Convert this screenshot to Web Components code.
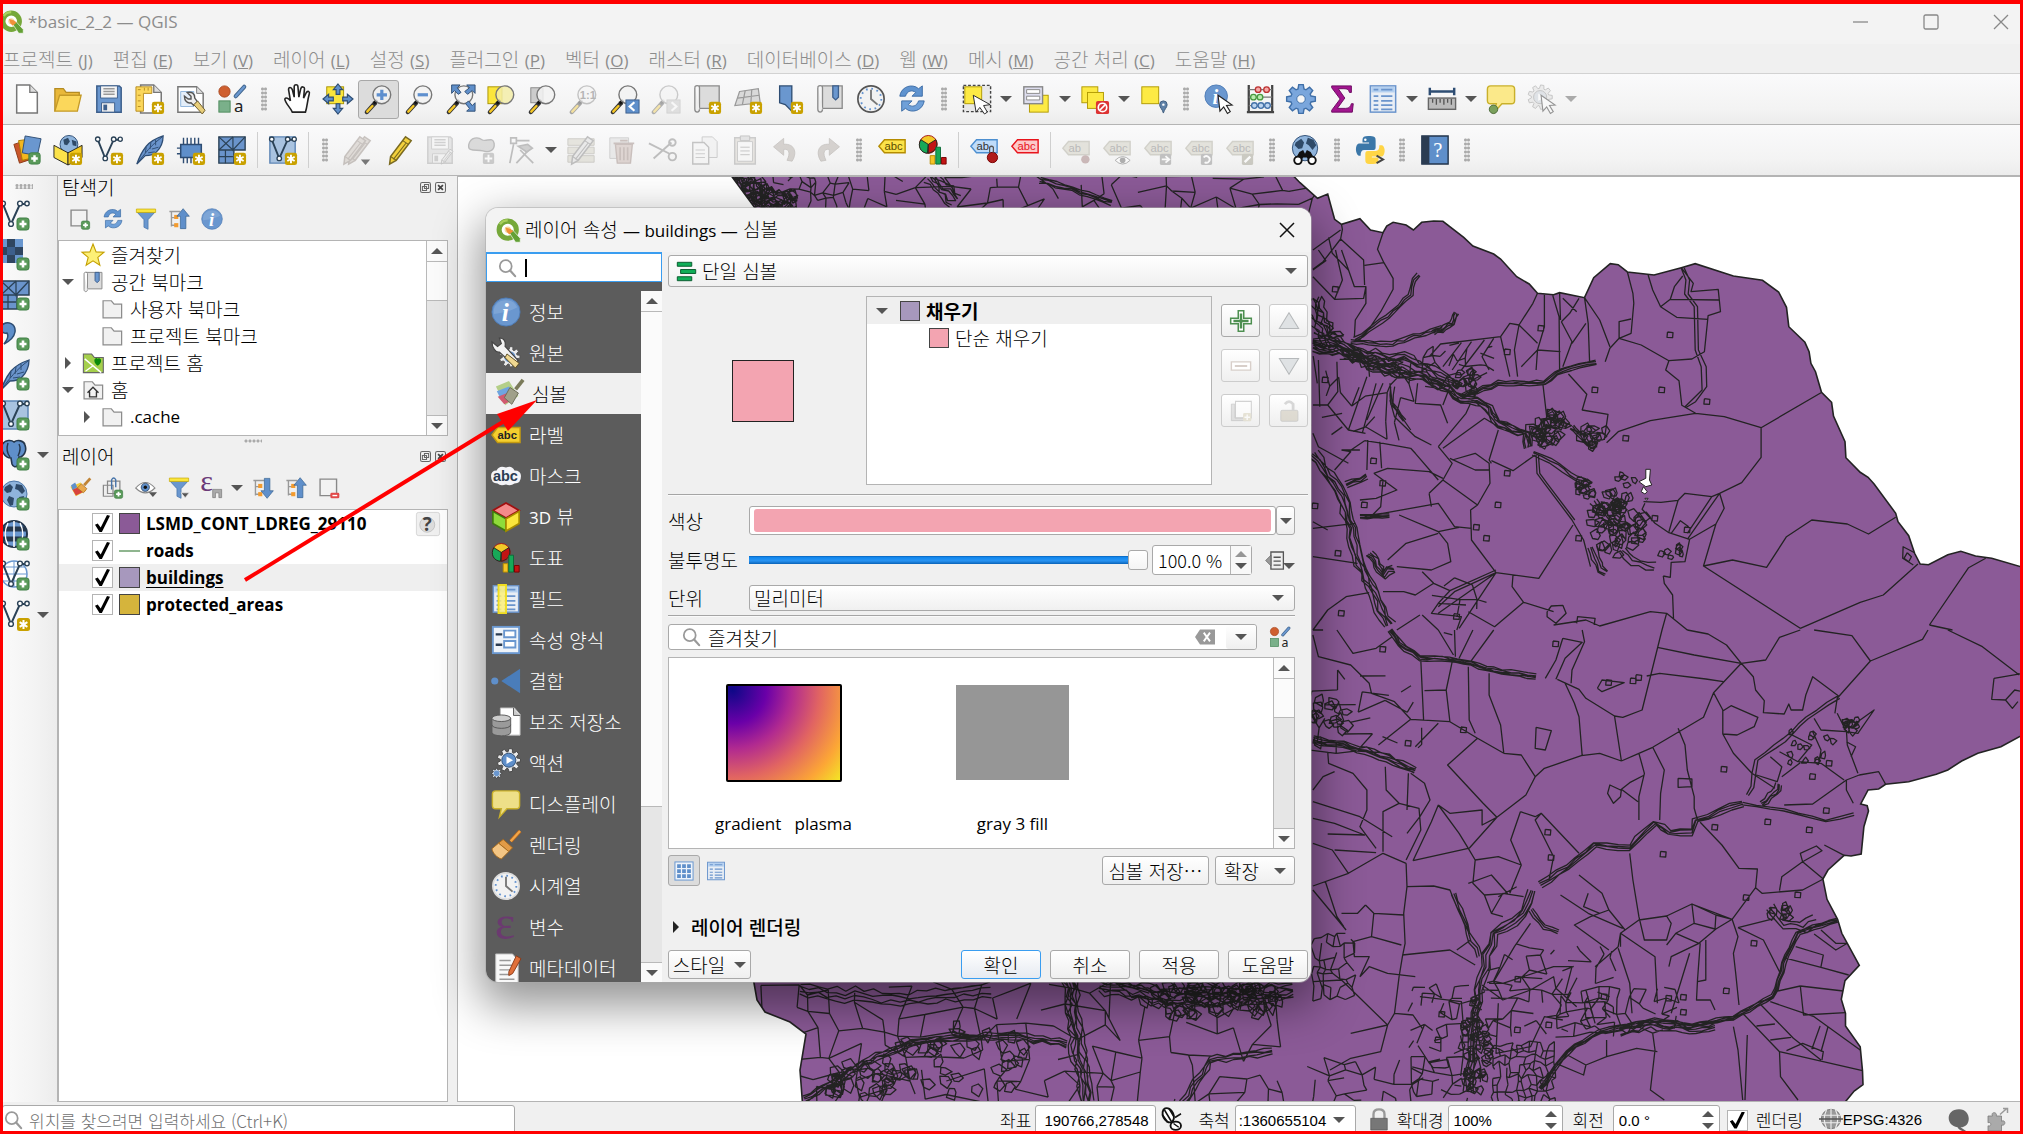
<!DOCTYPE html>
<html lang="ko">
<head>
<meta charset="utf-8">
<title>*basic_2_2 — QGIS</title>
<style>
  html, body { margin: 0; height: 100%; overflow: hidden; }
  body { font: 300 19px/24px "Noto Sans CJK KR", sans-serif; color: #000; background: #f0f0f0; }
</style>
</head>
<body>
<gis-app></gis-app>
<script>
/* ---------- icon library (32 x 32 grid) ---------- */
const plus = '<rect x="18" y="19" width="12" height="12" rx="2.5" fill="#5a9a5a" stroke="#3f7f45"/><path d="M24 21.500v7M20.500 25h7" stroke="#fff" stroke-width="2.600"/>';
const star = '<rect x="18" y="19" width="13" height="13" rx="2.500" fill="#c9a100"/><path d="M24.500 21v9M20.600 23.200l7.800 4.600M20.600 27.800l7.800-4.600" stroke="#fff" stroke-width="2"/>';
const gear = (cx, cy, r, n, fill, stroke) => {
  let d = '';
  for (let i = 0; i < n; i++) {
    const a = i * 2 * Math.PI / n, s = Math.PI / n;
    [[-.75, .72], [-.4, 1], [.4, 1], [.75, .72]].forEach(([o, k], j) => {
      d += (i || j ? 'L' : 'M') + (cx + r * k * Math.cos(a + o * s)).toFixed(1) + ' ' + (cy + r * k * Math.sin(a + o * s)).toFixed(1);
    });
  }
  return `<path d="${d}Z" fill="${fill}" stroke="${stroke}"/>`;
};
const mag = (inner = '', fill = '#f2f2f2') => `<path d="M12 20L3 30" stroke="#333" stroke-width="4.500" stroke-linecap="round"/><path d="M9 23.500L3.500 29.500" stroke="#f5c726" stroke-width="2.600" stroke-linecap="round"/><path d="M14 17l-3.500 4" stroke="#111" stroke-width="3"/><circle cx="19" cy="11.500" r="9.500" fill="${fill}" fill-opacity=".85" stroke="#777" stroke-width="1.500"/>${inner}`;
const cursor = '<path d="M15 12l2 17 4-4.500 4 7 3-2-4-6.500 6-.5z" fill="#fff" stroke="#222" stroke-width="1.200"/>';
const vee = '<path d="M4 5l8 20L21 5h6" fill="none" stroke="#2b4257" stroke-width="2"/><g fill="#fff" stroke="#2b4257" stroke-width="1.400"><circle cx="4" cy="4.500" r="2.400"/><circle cx="12" cy="25" r="2.400"/><circle cx="21" cy="4.500" r="2.400"/><circle cx="28" cy="4.500" r="2.200"/></g>';
const tag = (fill, stroke, ink, t = 'abc', y = 0) => `<path d="M2 ${12 + y}l6-7h22v14H8z" fill="${fill}" stroke="${stroke}" stroke-width="1.500"/><text x="8" y="${16 + y}" font-size="12" font-family="Liberation Sans" fill="${ink}">${t}</text>`;
const grayTag = (extra, t = 'abc') => `<g opacity=".55">${tag('#d5d3c6', '#b5b3a6', '#888', t, 2)}${extra}</g>`;
const feather = '<path d="M2 31C5 22 8 17 12 12 17 6 24 3 30 1c0 7-2 12-7 17-3 3-7 4-12 4z" fill="#6a94cc" stroke="#2e4d73" stroke-width="1.300"/><path d="M2 31C10 20 18 10 29 2M12 13l-1 6M17 8l-1 7M22 5v6M14 19l7-1M18 15l7-2" fill="none" stroke="#2e4d73"/>';
const meshBox = '<path d="M2 2h28v14H2zM2 16h16v14H2z" fill="#6a94cc" stroke="#2b4257" stroke-width="1.500"/><path d="M2 2l15 14M17 2L2 16M17 2v14L30 2M9 16v14M2 23h15" stroke="#2b4257" stroke-width="1.300"/>';
const vbox = '<path d="M2 2h27v28H2z" fill="#a9c3e0" stroke="#5e86b5" stroke-width="1.500"/>' + vee;
const globe = '<circle cx="15" cy="15" r="13" fill="#8fb4dc" stroke="#4d77a8"/><path d="M6 8l5-3 3 3-2 5-4 1-3-3zM17 5l6 1 3 6-3 3-4-4-3-1zM10 17l5 2-1 7-3 1-3-6zM20 18l5-1-1 5-3 2z" fill="#2f4a68"/>';
const refresh = '<path d="M3 13C4 5 12 0 20 3l3 2 4-3v11H16l4-4c-4-3-9-2-11 4z" fill="#5f93cf" stroke="#3c6ca5"/><path d="M29 18c-1 8-9 13-17 10l-3-2-4 3V18h11l-4 4c4 3 9 2 11-4z" fill="#6fa0d8" stroke="#3c6ca5"/>';
const info = '<circle cx="16" cy="16" r="15" fill="#6a97cf" stroke="#4d7bb5"/><path d="M3 13A13.500 13.500 0 0 1 28 11C20 16 10 17 3 18z" fill="#8fb3de" opacity=".5"/><text x="11.500" y="26" font-size="27" font-style="italic" font-weight="700" font-family="Liberation Serif" fill="#fff">i</text>';
const clock = '<circle cx="16" cy="16" r="14" fill="#f2f2f2" stroke="#555" stroke-width="1.800"/><circle cx="16" cy="16" r="11" fill="none" stroke="#5e8fce" stroke-width="2" stroke-dasharray="1.800 3.960"/><path d="M16 6v10l7 6" fill="none" stroke="#777" stroke-width="2"/>';
const folder = '<path d="M3 29V4h12l4 5h11v20z" fill="#f1f1f1" stroke="#8c8c8c" stroke-width="1.800"/>';
const bookpage = '<path d="M3 4c0-3 5-3 5 0v22h21V2H6" fill="#dcdcdc" stroke="#8a8a8a" stroke-width="1.400"/><path d="M3 4v23c0 4 5 4 5 0" fill="#eee" stroke="#8a8a8a" stroke-width="1.400"/>';
const tablei = '<rect x="2.500" y="2" width="27" height="28" fill="#e9eef5" stroke="#6a94cc" stroke-width="1.600"/><rect x="3.500" y="3" width="25" height="6" fill="#b4d0f0"/><path d="M6 6h5M14 6h12M6 13h5M14 13h12M6 18h5M14 18h12M6 22.500h5M14 22.500h12M6 27h5M14 27h12" stroke="#6a94cc" stroke-width="1.800"/>';
const funnel = '<path d="M3 6h26L19 17v14l-6-3V17z" fill="#6a97cf" stroke="#4572a8"/><path d="M2 1.500h28v5H2z" fill="#fbe63c" stroke="#c4a800"/>';
const treeArrow = up => `<path d="M2 5h16M5 5v22M5 14h6M5 25h6" stroke="#999" stroke-width="2" fill="none"/><rect x="9" y="10" width="6" height="6" fill="#f39b2e"/><rect x="9" y="22" width="6" height="6" fill="#f39b2e"/><path d="${up ? 'M22 1l9 11h-5v18h-8V12h-5z' : 'M22 31l9-11h-5V2h-8v18h-5z'}" fill="#5f8fca" stroke="#34608f"/>`;
const styleMgr = '<circle cx="8" cy="8" r="6" fill="#cf5f2f" stroke="#a84720"/><path d="M20 13l9-10" stroke="#41658c" stroke-width="4.500" stroke-linecap="round"/><path d="M20 13l9-10" stroke="#6a97cf" stroke-width="2.500" stroke-linecap="round"/><rect x="2" y="18" width="12" height="12" fill="#7ab08a" stroke="#4c8a5c"/><text x="18" y="30" font-size="18" font-weight="400" font-family="Noto Sans" fill="#222">a</text>';
const diagram = '<circle cx="11" cy="10" r="9.500" fill="#f2c928" stroke="#a31515"/><path d="M11 10L3 5C-1 12 3 19 10 19.500z" fill="#17a858" stroke="#222"/><path d="M11 10l8-5c3 6 0 13-8 14.500z" fill="#c21414" stroke="#222"/><path d="M13 22h5v9h-5z" fill="#f5c426" stroke="#b58c00"/><path d="M19 13h5v18h-5z" fill="#17a858" stroke="#0d6b38"/><path d="M25 24h5v7h-5z" fill="#c21414" stroke="#700"/>';
const brush = '<path d="M31 1l-10 11" stroke="#b5651d" stroke-width="4"/><path d="M31 1l-10 11" stroke="#f3a648" stroke-width="2.400"/><path d="M13 10l10 9-4 4-11-9z" fill="#e19b47" stroke="#a86a1c"/><path d="M8 14l11 9-8 8C6 29 2 25 1 20z" fill="#f3c584" stroke="#a86a1c"/>';
const bubble = (c = '#f5e680') => `<path d="M5 2h22q3.500 0 3.500 3.500v12q0 3.500-3.500 3.500H17l-8 9 2-9H5q-3.500 0-3.500-3.500v-12Q1.500 2 5 2z" fill="${c}" stroke="#c9b02a" stroke-width="1.500"/>`;
const logo = '<circle cx="15" cy="15" r="11" fill="#fff" stroke="#76a83a" stroke-width="6.500"/><path d="M5 8A12 12 0 0 1 15 3" stroke="#a9cf5c" stroke-width="3" fill="none"/><path d="M17 19l4-4 10 11v5h-6z" fill="#63a035" stroke="#fff" stroke-width=".800"/><circle cx="15" cy="15" r="4" fill="#f6d9a0"/><path d="M12 12l7 2 3 3-5 4-3-3z" fill="#f0913a"/>';
const page = (x = 5) => `<path d="M${x} 1h14l8 8v22H${x}z" fill="#fff" stroke="#777" stroke-width="1.600"/><path d="M${x + 14} 1v8h8" fill="#ddd" stroke="#777" stroke-width="1.400"/>`;
const pencil = (a, b) => `<path d="M23 2l6 4L13 27l-7 4 1-8z" fill="${a}" stroke="${b}" stroke-width="1.600"/><path d="M20 6l6 4M7 23l6 4M24 8L10 26" stroke="${b}" stroke-width="1.200"/>`;
const save = (a, b) => `<path d="M3 2h24l2 2v26H3z" fill="${a}" stroke="${b}" stroke-width="1.600"/><path d="M7 2h18v13H7z" fill="#f4f4f4" stroke="${b}"/><path d="M10 5h12M10 8h12M10 11h12" stroke="#999" stroke-width="1.500"/><path d="M8 20h14v10H8z" fill="#eee" stroke="${b}"/><path d="M10 22h4v6h-4z" fill="${b}"/>`;
const curl = '<path d="M25 31C31 22 29 10 15 11V4L3 14l12 10v-7c7-1 8 5 4 13z" fill="#b5aea8" stroke="#9a948e"/>';
const ICONS = {
  logo, info, refresh, clock, folder, funnel, brush, diagram, globe,
  doc: page(), open: '<path d="M2 29V5h9l3 4h14v5" fill="#e9b83a" stroke="#b58c22" stroke-width="1.400"/><path d="M2 29l5-17h23l-4 17z" fill="#fbd75b" stroke="#c49a28" stroke-width="1.400"/>',
  save: save('#6a97cf', '#3d5f8c'),
  layout: page(6) + '<path d="M1 3h17v7H9v19H1z" fill="#fbd75b" stroke="#b58c22"/><path d="M3 6h3M3 12h3M3 18h3M3 24h3M10 4v3M14 4v3" stroke="#b58c22"/>' + star,
  layoutmgr: '<path d="M2 3h20l7 7v20H2z" fill="#fff" stroke="#777" stroke-width="1.600"/><path d="M22 3v7h7" fill="#ddd" stroke="#777"/><path d="M5 8h14v16H5z" fill="#e4eef9" stroke="#8fb4dc"/><path d="M12 9l4 4v3h-3l-4-3c0 5 3 8 7 7l3 3 4-4-3-4c0-5-3-7-8-6z" fill="#eee" stroke="#555" stroke-width="1.500"/><path d="M19 22l4-4 8 10-3 4z" fill="#e8ce7a" stroke="#6b5a2a"/>',
  stylemgr: styleMgr,
  hand: '<path d="M11 30C9 25 3 20 3 16c1-2 4-1 6 2L7 6c0-3 3-3 4 0l2 8V3c0-3 4-3 4 0l1 11 2-9c1-3 4-2 4 0l-1 10 3-6c2-2 4-1 3 2-2 7-2 13-4 19z" fill="#fff" stroke="#222" stroke-width="1.700"/>',
  pansel: '<rect x="4" y="3" width="18" height="18" fill="#fbe63c" stroke="#a89200"/><path d="M16 0l5 6h-3v5h-4V6h-3zM16 32l5-6h-3v-5h-4v5h-3zM0 16l6-5v3h5v4H6v3zM32 16l-6-5v3h-5v4h5v3z" fill="#5f8fca" stroke="#2e4d73" stroke-width="1.200"/>',
  zoomin: mag('<path d="M19 6v11M13.500 11.500h11" stroke="#5e8fce" stroke-width="3.400"/>'),
  zoomout: mag('<path d="M13.500 11.500h11" stroke="#5e8fce" stroke-width="3.400"/>'),
  zoomfull: mag() + '<path d="M6 1h9l-3 3 4 5-3 2-4-4-3 3zM31 1v9l-3-3-5 4-3-3 5-4-3-3zM31 29h-9l3-3-4-5 3-3 4 5 3-3z" fill="#5f8fca" stroke="#2e4d73"/>',
  zoomsel: '<rect x="1" y="3" width="15" height="18" fill="#fbe63c" stroke="#a89200"/>' + mag('', '#f3eda8'),
  zoomlayer: '<rect x="3" y="4" width="13" height="16" fill="#ccc" stroke="#888"/>' + mag(),
  zoomone: '<g opacity=".4">' + mag('<text x="11.500" y="16" font-size="12" font-weight="700" font-family="Liberation Sans" fill="#555">1:1</text>') + '</g>',
  zoomlast: mag() + '<rect x="17" y="17" width="14" height="14" fill="#5f8fca" stroke="#3d5f8c"/><path d="M26 19.500l-5 4.500 5 4.500" fill="none" stroke="#fff" stroke-width="2.400"/>',
  zoomnext: '<g opacity=".35">' + mag() + '<rect x="17" y="17" width="14" height="14" fill="#bbb" stroke="#999"/><path d="M22 19.500l5 4.500-5 4.500" fill="none" stroke="#fff" stroke-width="2.400"/></g>',
  newmap: bookpage + star, new3d: '<path d="M7 8l20-3 2 15-27 3z" fill="#d9d9d9" stroke="#999" stroke-width="1.300"/><path d="M13 7l-3 15M20 6l-1 15M5 15l23-3" fill="none" stroke="#999" stroke-width="1.300"/>' + star,
  bmnew: '<path d="M6 2h13v27l-7-7-6-2z" fill="#6a97cf" stroke="#2e4d73" stroke-width="1.400"/>' + star,
  bookmark: bookpage + '<path d="M19 2h6v12l-3 3-3-3z" fill="#6a97cf" stroke="#3d5f8c" stroke-width="1.400"/>',
  select: '<rect x="1.500" y="1.500" width="29" height="28" fill="#e8e8e8" stroke="#444" stroke-dasharray="3 2" stroke-width="1.500"/><rect x="3" y="3" width="18" height="18" fill="#fdea44" stroke="#b09900"/><path d="M12 12l3 18 4-5 5 7 3-2-4-7 7-1z" fill="#fff" stroke="#222"/>',
  selform: '<rect x="9" y="12" width="20" height="18" fill="#fdea44" stroke="#b09900"/><rect x="3" y="3" width="20" height="18" fill="#dde" stroke="#888" stroke-width="1.500"/><path d="M6 6h14v4H6zM6 13h14v4H6z" fill="#fff" stroke="#888"/>',
  deselect: '<rect x="2" y="3" width="17" height="17" fill="#fdea44" stroke="#b09900"/><rect x="8" y="9" width="17" height="17" fill="#fdea44" stroke="#b09900"/><rect x="17" y="18" width="14" height="14" rx="2" fill="#d33"/><circle cx="24" cy="25" r="4.500" fill="none" stroke="#fff" stroke-width="1.800"/><path d="M21 28l6-6" stroke="#fff" stroke-width="1.800"/>',
  selpin: '<rect x="3" y="3" width="18" height="18" fill="#fdea44" stroke="#b09900"/><path d="M26 31c-1-4-4-6-4-9a4 4 0 0 1 8 0c0 3-3 5-4 9z" fill="#5f82a8" stroke="#3d5b7c"/><circle cx="26" cy="22" r="1.300" fill="#fff"/>',
  identify: '<circle cx="13" cy="13" r="12" fill="#6a97cf" stroke="#4d7bb5"/><text x="9" y="21" font-size="22" font-style="italic" font-weight="700" font-family="Liberation Serif" fill="#fff">i</text>' + cursor,
  abacus: '<path d="M4 1v28M29 1v28M2 30h29" stroke="#444" stroke-width="2.400"/><path d="M4 6h25M4 14h25M4 23h25" stroke="#777" stroke-width="1.400"/><g stroke-width="1.400"><circle cx="14" cy="6" r="3" fill="#f7a8a8" stroke="#b33"/><circle cx="23" cy="6" r="3" fill="#f7a8a8" stroke="#b33"/><circle cx="9" cy="14" r="3" fill="#b9ecb0" stroke="#4a9a40"/><circle cx="16" cy="14" r="3" fill="#b9ecb0" stroke="#4a9a40"/><circle cx="10" cy="23" r="3" fill="#bcd4f0" stroke="#4572a8"/><circle cx="17" cy="23" r="3" fill="#bcd4f0" stroke="#4572a8"/><circle cx="24" cy="23" r="3" fill="#bcd4f0" stroke="#4572a8"/></g>',
  gear: gear(16, 16, 15.5, 8, '#7aa6dc', '#3f6fa8').replace('/>', ' stroke-width="1.500"/>') + '<circle cx="16" cy="16" r="4.500" fill="#f6f6f6" stroke="#3f6fa8"/>',
  sigma: '<path d="M5 2h21v7h-2c-1-3-2-4-6-4h-6l7 10-8 11h9c4 0 5-2 6-5h2l-1 9H5v-2l9-12L5 4z" fill="#a2158f" stroke="#6b0a60"/>',
  table: tablei,
  measure: '<path d="M3 8h26M3 4v8M29 4v8" stroke="#2e4d73" stroke-width="2.600"/><rect x="1.500" y="15" width="29" height="12" fill="#bbb" stroke="#666" stroke-width="1.500"/><path d="M6 16v4M10 16v6M14 16v4M18 16v6M22 16v4M26 16v6" stroke="#555" stroke-width="1.400"/>',
  maptip: bubble('#fbe98a') + '<circle cx="8" cy="27" r="4.500" fill="#7aa05c" stroke="#4c6b3a"/>',
  runaction: '<g opacity=".45">' + gear(14, 14, 13, 9, '#ddd', '#888') + '<circle cx="14" cy="14" r="7" fill="#c4ccd4" stroke="#888"/><path d="M12 10l6 4-6 4z" fill="#fff"/>' + cursor + '</g>',
  datasrc: '<path d="M2 10l12-4 6 20-12 4z" fill="#c9562a" stroke="#8c3a18"/><path d="M7 6l14-2 3 20-13 3z" fill="#f3b71e" stroke="#a87a00"/><path d="M14 1l17 3-4 18-16-3z" fill="#6a97cf" stroke="#2e4d73"/>' + plus,
  geopkg: '<circle cx="17" cy="10" r="9.500" fill="#8fb4dc" stroke="#2e4d73"/><path d="M11 5l5-2 2 4-3 4-3-1zM20 5l5 2v5l-4-1z" fill="#2f4a68"/><path d="M1 11l15 8v13L1 24z" fill="#fbe24a" stroke="#222"/><path d="M31 11l-15 8v13l15-8z" fill="#f3c81e" stroke="#222"/>' + star,
  shp: vee + star, spatialite: feather + star,
  memory: '<path d="M5 10h22v14H5z" fill="#5f8fca" stroke="#2e4d73" stroke-width="1.600"/><path d="M8 3v7M12 3v7M16 3v7M20 3v7M24 3v7M8 24v6M12 24v6M16 24v6M1 14h4M1 20h4" stroke="#2e4d73" stroke-width="1.500"/>' + star,
  meshnew: meshBox + star, virtual: vbox + star,
  edits: '<g opacity=".5">' + pencil('#ccc4bc', '#998f88') + '<g transform="translate(-5 0)">' + pencil('#ccc4bc', '#998f88') + '</g></g><path d="M19 26h10l-5 6z" fill="#777"/>',
  pencil: pencil('#f3d13c', '#7a6a20'),
  savedit: '<g opacity=".4">' + save('#ccc', '#999') + '<g transform="translate(14 14) scale(.55)">' + pencil('#ddd', '#777') + '</g></g>',
  addpoly: '<g opacity=".45"><path d="M3 10c2-8 10-8 14-5s12-4 13 4-6 10-12 8-17 2-15-7z" fill="#b9b9b9" stroke="#777" stroke-width="1.500"/><rect x="18" y="19" width="12" height="12" rx="2" fill="#999"/><path d="M24 21v8M20 25h8" stroke="#fff" stroke-width="2"/></g>',
  vertex: '<g opacity=".5" fill="none" stroke="#888" stroke-width="1.800"><path d="M4 3h6v6H4zM10 6h14M3 30L7 10M14 16l14 14M25 14L10 30" /><path d="M12 12l10-2 5 4-6 4z" fill="#aaa"/></g>',
  multiedit: '<g opacity=".5"><path d="M2 4h28v7H2zM2 13h28v7H2zM2 22h28v7H2z" fill="#d5d3c6" stroke="#a5a39a"/>' + pencil('#ddd', '#888') + '</g>',
  trash: '<g opacity=".5"><path d="M3 3h20v22H3z" fill="#ddd" stroke="#aaa"/><path d="M9 10h18l-2 20H11z" fill="#c9b6b0" stroke="#a08c86" stroke-width="1.500"/><path d="M7 9h22M14 6h8M14 13v14M18 13v14M22 13v14" stroke="#a08c86" stroke-width="1.800"/></g>',
  cut: '<g opacity=".5" fill="none" stroke="#888" stroke-width="2"><path d="M1 9l22 11M6 25L25 8"/><circle cx="26" cy="23" r="4"/><circle cx="26" cy="8" r="3.500"/></g>',
  copy: '<g opacity=".45"><path d="M14 2h11l5 5v17H14z" fill="#eee" stroke="#999"/><path d="M4 8h12l5 5v18H4z" fill="#f5f5f5" stroke="#888" stroke-width="1.500"/><path d="M7 16h10M7 20h10M7 24h10" stroke="#999"/></g>',
  paste: '<g opacity=".45"><path d="M5 3h22v28H5z" fill="#d5d0c8" stroke="#999" stroke-width="1.500"/><path d="M8 7h16v21H8z" fill="#f8f8f8" stroke="#999"/><path d="M11 1h10v5H11zM11 13h10M11 17h10M11 21h10" stroke="#888" fill="#ccc"/></g>',
  undo: `<g opacity=".5" transform="scale(.9)">${curl}</g>`, redo: `<g opacity=".5" transform="translate(32 0) scale(-.9 .9)">${curl}</g>`,
  label: tag('#fbe24a', '#b58c00', '#5a4a00'), labelpin: tag('#bfdcfa', '#4d8fd0', '#333', 'ab') + '<circle cx="25" cy="24" r="5.500" fill="#b01c1c" stroke="#700"/><path d="M22 19v-6q2-2 4 0v6" fill="none" stroke="#555" stroke-width="1.300"/>',
  labelred: tag('#fcc9c9', '#e8141c', '#e8141c'),
  lb1: grayTag('<circle cx="26" cy="26" r="4.500" fill="#a88"/>', 'ab'), lb2: grayTag('<path d="M14 27q8-8 16 0-8 8-16 0z" fill="#fff" stroke="#777"/><circle cx="22" cy="27" r="3" fill="#777"/>'),
  lb3: grayTag('<rect x="18" y="20" width="12" height="12" rx="2" fill="#999"/><path d="M20 26h7M24 22.500l4 3.500-4 3.500" stroke="#fff" fill="none" stroke-width="2"/>'),
  lb4: grayTag('<rect x="18" y="20" width="12" height="12" rx="2" fill="#999"/><path d="M22 29a3.500 3.500 0 1 0-1-5" stroke="#fff" fill="none" stroke-width="2"/>'),
  lb5: grayTag('<rect x="18" y="20" width="12" height="12" rx="2" fill="#aaa89a"/><path d="M21 29l6-6" stroke="#fff" stroke-width="2.600"/>'),
  metasearch: '<circle cx="16" cy="14" r="13.500" fill="#8fb4dc" stroke="#2e4d73"/><path d="M6 8l6-4 3 4-2 6-4 1-4-4zM19 3l6 2 3 6-4 5-4-5-3-2z" fill="#2f4a68"/><path d="M10 18l4-2 2 4 2-4 4 2 5 9-5 3-4-6h-4l-4 6-5-3z" fill="#111"/><circle cx="8.500" cy="27" r="4" fill="#fff" stroke="#111" stroke-width="2"/><circle cx="23.500" cy="27" r="4" fill="#fff" stroke="#111" stroke-width="2"/>',
  python: '<path d="M14 1c7 0 8 1 8 5v7c0 3-2 3-4 3h-8c-3 0-4 2-4 6H4c-4-2-4-12 0-13h11V8H8V5c0-3 2-4 6-4z" fill="#3b77a8"/><path d="M19 31c-7 0-8-1-8-5v-6c0-3 2-3 4-3h7c3 0 4-2 4-6h3c4 2 3 11 0 12H18v1h7v3c0 3-2 4-6 4z" fill="#ffd545"/><circle cx="11" cy="5" r="1.300" fill="#fff"/><path d="M23 22l7 4-7 4" fill="none" stroke="#444" stroke-width="2"/>',
  help: '<path d="M2 1h28v30H2z" fill="#5f8fca" stroke="#24364c" stroke-width="1.500"/><path d="M2 1h8v30H2z" fill="#2b3c52"/><text x="14" y="23" font-size="22" font-family="Liberation Serif" fill="#fff">?</text>',
  vecadd: vee + plus, rasteradd: '<path d="M0 0h24v24H0z" fill="#6a97cf"/><path d="M8 0h8v8H8zM0 8h8v8H0zM16 8h8v8h-8zM8 16h8v8H8z" fill="#24364c" opacity=".85"/><path d="M8 8h8v8H8z" fill="#3d5f8c"/>' + plus,
  meshadd: meshBox + plus, csvadd: '<path d="M3 6c6-5 14-1 13 7-1 6-5 9-11 12 4-5 5-8 3-11-5 1-8-4-5-8z" fill="#5f8fca" stroke="#2e4d73" stroke-width="1.500"/>' + plus,
  litadd: feather + plus, virtadd: vbox + plus,
  pgadd: '<path d="M3 6C6 0 13 1 15 3c4-3 10-1 11 3 2 6-1 10-4 12l-2 0-1 8c-2 3-5 2-6-1l-1-6c-7 0-10-8-9-13z" fill="#5f8fca" stroke="#24364c" stroke-width="1.600"/><path d="M9 4c-2 6-1 10 2 14M20 5c2 4 1 8-1 12" stroke="#24364c" fill="none" stroke-width="1.400"/>' + plus,
  wmsadd: globe + plus, xyzadd: '<circle cx="15" cy="15" r="13" fill="#6a97cf" stroke="#24364c" stroke-width="2"/><path d="M3 10h24M3 20h24" stroke="#24364c" stroke-width="5"/><path d="M15 2v26M9 4c-4 8-4 14 0 22M21 4c4 8 4 14 0 22" stroke="#fff" fill="none" stroke-width="1.500"/>' + plus,
  wfsadd: '<circle cx="15" cy="15" r="13" fill="#fff" stroke="#6a97cf" stroke-width="1.500"/><path d="M15 2v26M2 15h26M4 8h22M4 22h22" stroke="#6a97cf"/>' + vee + plus,
  boxplus: '<path d="M3 3h23v23H3z" fill="#f2f2f2" stroke="#888" stroke-width="2"/>' + plus, boxminus: '<path d="M3 3h24v24H3z" fill="#f2f2f2" stroke="#888" stroke-width="2"/><rect x="18" y="23" width="13" height="8" rx="2" fill="#e24a4a"/><path d="M21 27h7" stroke="#fff" stroke-width="2"/>',
  down: treeArrow(false), up: treeArrow(true),
  favstar: '<path d="M16 0l4.500 11.500L32 12l-9 7.500L26 31l-10-6.500L6 31l3-11.500L0 12l11.500-.5z" fill="#fdf076" stroke="#c4a000" stroke-width="1.600"/>',
  prjhome: '<path d="M2 30V3h12l4 5h13v22z" fill="#a5cf4c" stroke="#666" stroke-width="1.600"/><path d="M4 10l24 20M16 20L5 28" stroke="#fff" stroke-width="2"/><path d="M23 20c-6-4-6-10-3-11 2-1 3 1 3 1s2-2 4 0c2 3 0 7-4 10z" fill="#0a8a0a"/>',
  home: folder + '<path d="M8 20l8-8 8 8M11 18v8h10v-8" fill="none" stroke="#333" stroke-width="2"/>',
  layerstyle: '<path d="M2 14l15-6 8 12-15 8z" fill="#f0cc3c"/><path d="M5 18l14-5 3 8-12 6z" fill="#d8433c"/><path d="M3 12l6-4 3 7-7 4z" fill="#5f8fca"/><path d="M31 2l-9 10" stroke="#c08436" stroke-width="4"/><path d="M18 10l8 7-5 6-9-7z" fill="#e9a84c" stroke="#a86a1c"/>',
  group: '<path d="M2 12h14v16H2zM8 6h18v18H8z" fill="#eee" stroke="#888" stroke-width="1.800"/><path d="M14 18V4q3-5 6 0v11" fill="none" stroke="#4572a8" stroke-width="2"/>' + plus,
  eye: '<path d="M1 16q14-16 28 0-14 14-28 0z" fill="#fff" stroke="#888" stroke-width="1.600"/><circle cx="15" cy="15" r="6" fill="#5f8fca" stroke="#24364c"/><circle cx="15" cy="15" r="2.500" fill="#111"/><path d="M20 22h12l-6 7z" fill="#555"/>',
  funneldd: funnel + '<path d="M19 23h12l-6 7z" fill="#555" stroke="#f0f0f0"/>',
  eps: '<text x="-1" y="21" font-size="44" font-weight="400" font-family="Liberation Serif" fill="#6b3a78">ε</text><path d="M17 18h13v12h-4v-7h-5v7h-4z" fill="#aaa" stroke="#777"/>',
  unknowncrs: '<rect x="0.500" y="0.500" width="31" height="31" rx="3" fill="#f0f0f0" stroke="#ccc"/><circle cx="15" cy="17" r="10" fill="#ddd" stroke="#bbb"/><text x="9" y="25" font-size="25" font-weight="700" font-family="Open Sans" fill="#444">?</text>',
  src: gear(20, 20, 11, 9, '#ececec', '#555') + '<circle cx="20" cy="20" r="6" fill="#6a97cf"/><path d="M1 4l6 5 4-3-2-6c5 0 7 4 6 9l14 15-5 5L9 15C5 16 1 10 1 4z" fill="#f2f2f2" stroke="#444" stroke-width="1.300"/><path d="M17 17l13 10-4 5-11-11z" fill="#f0d890" stroke="#5a4a20"/>',
  symb: '<path d="M2 8l14-6 10 16-14 10z" fill="#b4cf88"/><path d="M3 13l13-5 5 9-13 6z" fill="#6fa4e0"/><path d="M4 19l12-5 4 8-9 5z" fill="#d05a70"/><path d="M31 1l-8 10" stroke="#7a7a5a" stroke-width="4"/><path d="M17 9l9 6-7 12-8-7z" fill="#a0a08a" stroke="#6b6b58"/>',
  plabel: '<path d="M1 16l6-8h24v16H7z" fill="#f5cf2e" stroke="#c49a10" stroke-width="1.500"/><text x="7" y="20" font-size="12" font-weight="700" font-family="Liberation Sans" fill="#222">abc</text>',
  mask: '<path d="M0 16q0-6 6-6 3-6 10-3 6-3 9 3 7 0 7 6 0 8-7 8-4 3-9 1-6 2-9-1-7 0-7-8z" fill="#f4f4f8"/><text x="2" y="21" font-size="15.500" font-weight="700" font-family="Liberation Sans" fill="#2b3c52">abc</text>',
  cube: '<path d="M16 1l14 8-14 8L2 9z" fill="#f48a8a" stroke="#a01010" stroke-width="1.800"/><path d="M2 10l14 8v13L2 23z" fill="#8fdc3a" stroke="#3f7a10" stroke-width="1.800"/><path d="M30 10l-14 8v13l14-8z" fill="#fbe63c" stroke="#a88c00" stroke-width="1.800"/>',
  fields: tablei + '<path d="M8 1h8v30H8z" fill="#fdf07a" fill-opacity=".85" stroke="#f0dc20" stroke-width="2"/>',
  form: '<rect x="2" y="2" width="28" height="28" fill="#eef3f9" stroke="#6a97cf" stroke-width="2"/><path d="M5 10h7M5 21h7" stroke="#2b3c52" stroke-width="2.600"/><path d="M14 6h12v7H14zM14 17h12v7H14z" fill="#fff" stroke="#6a97cf" stroke-width="2"/>',
  join: '<circle cx="4" cy="16" r="3.800" fill="#5f8fca"/><path d="M11 16L31 3v26z" fill="#4a7dba"/>',
  aux: '<path d="M10 1h15l6 7v22H10z" fill="#fff" stroke="#bbb"/><path d="M24 1v8h7" fill="#ccc" stroke="#555"/><path d="M1 12v15c0 5 20 5 20 0V12z" fill="#9a9a9a" stroke="#555"/><ellipse cx="11" cy="12" rx="10" ry="3.500" fill="#ccc" stroke="#555"/><path d="M1 19c0 5 20 5 20 0" fill="none" stroke="#555"/>',
  action: gear(19, 13, 12.500, 9, '#ececec', '#444') + '<circle cx="19" cy="13" r="7.500" fill="#5f8fca" stroke="#2e4d73"/><path d="M16.500 9l7 4-7 4z" fill="#fff"/>' + gear(6, 27, 5.500, 8, '#dfe8f2', '#444') + '<circle cx="6" cy="27" r="3" fill="#6a97cf"/>',
  display: bubble('#eedf88'), temporal: clock.replace('#555', '#ddd'),
  vars: '<text x="4" y="29" font-size="52" font-weight="400" font-family="Liberation Serif" fill="#6b3a70">ε</text>',
  meta: '<path d="M5 1h18l6 7v26H5z" fill="#f8f8f8" stroke="#bbb"/><path d="M9 8h12M9 13h16M9 18h12M9 23h12M9 28h16" stroke="#999" stroke-width="1.500"/><path d="M32 6l-5-3-8 17v4l4-2z" fill="#e0703a" stroke="#8c3a18"/>',
  single: '<path d="M2 2h22v6H2z" fill="#0fae58" stroke="#0a5c30" stroke-width="1.500"/><path d="M7 13h23v6H7z" fill="#0fae58" stroke="#0a5c30" stroke-width="1.500"/><path d="M2 24h22v6H2z" fill="#0fae58" stroke="#0a5c30" stroke-width="1.500"/>',
  add: '<path d="M12 1h8v11h11v8H20v11h-8V20H1v-8h11z" fill="#fff" stroke="#4d8f50" stroke-width="2.200"/><path d="M16 5v22M5 16h22" stroke="#4d8f50" stroke-width="3.600"/>',
  remove: '<path d="M2 10h28v12H2z" fill="#fff" stroke="#d8cfca" stroke-width="2"/><path d="M7 16h18" stroke="#d8cfca" stroke-width="3"/>',
  tup: '<path d="M16 4l14 23H2z" fill="#dfe2e4" stroke="#b5b8ba" stroke-width="1.500"/>', tdown: '<path d="M16 28L2 5h28z" fill="#dfe2e4" stroke="#b5b8ba" stroke-width="1.500"/>',
  dup: '<g opacity=".5"><path d="M2 6h5v20h16v4H2z" fill="#ccc" stroke="#999"/><path d="M8 2h23v24H8z" fill="#fff" stroke="#aaa" stroke-width="1.500"/><rect x="19" y="19" width="12" height="12" rx="2" fill="#d9d2b8"/><path d="M25 21v8M21 25h8" stroke="#fff" stroke-width="2"/></g>',
  unlock: '<g opacity=".5"><rect x="4" y="15" width="25" height="16" rx="2" fill="#c9c2b0" stroke="#999"/><path d="M10 6q6-7 12 0v9" fill="none" stroke="#b5b5b5" stroke-width="4"/></g>',
  dd: '<path d="M9 3h19v26H9z" fill="#eee" stroke="#555" stroke-width="2"/><path d="M9 8l-8 8 8 8z" fill="#999" stroke="#555"/><path d="M13 11h11M13 17h11M13 23h11" stroke="#555" stroke-width="2"/>',
  search: '<circle cx="14" cy="13" r="9.500" fill="none" stroke="#999" stroke-width="2.800"/><path d="M21 20l8 9" stroke="#999" stroke-width="3.600" stroke-linecap="round"/>',
  clear: '<path d="M0 16l8-12h24v24H8z" fill="#999"/><path d="M14 9l10 14M24 9L14 23" stroke="#fff" stroke-width="3"/>',
  gridview: '<rect x="1.500" y="1.500" width="29" height="29" fill="#eef3fa" stroke="#6a97cf" stroke-width="1.600"/><path d="M5 5h6v6H5zM13 5h6v6h-6zM21 5h6v6h-6zM5 13h6v6H5zM13 13h6v6h-6zM21 13h6v6h-6zM5 21h6v6H5zM13 21h6v6h-6zM21 21h6v6h-6z" fill="#5f8fca"/>',
  mouse: '<ellipse cx="11" cy="11" rx="7" ry="10" transform="rotate(-25 11 11)" fill="#fff" stroke="#111" stroke-width="2.500"/><path d="M6 4l9 15M12 2l6 10M3 10l7 10" stroke="#111" stroke-width="2"/><ellipse cx="21" cy="25" rx="7" ry="5.500" fill="#fff" stroke="#111" stroke-width="2.500"/><path d="M18 22l7 5M20 14l8-5" stroke="#111" stroke-width="2"/>',
  lock: '<path d="M8 16V9q0-7 8-7t8 7v7" fill="none" stroke="#999" stroke-width="3.400"/><path d="M4 15h24v17H4z" fill="#777" stroke="#555"/>',
  crs: '<circle cx="16" cy="16" r="13" fill="#999" stroke="#666"/><path d="M16 2v28M3 11h26M3 21h26M10 4c-4 8-4 16 0 24M22 4c4 8 4 16 0 24" stroke="#eee" fill="none" stroke-width="1.500"/><path d="M0 16h32" stroke="#555" stroke-width="2"/>',
  chat: '<path d="M16 3c17 0 17 24 2 24l9 6c-6 0-11-2-13-6C-2 25-2 3 16 3z" fill="#666"/>',
  puzzle: '<path d="M4 12h6c-3-6 7-6 5 0h7v7c6-3 6 7 0 5v8H4v-7c5 2 5-6 0-4z" fill="#aaa" stroke="#777"/><path d="M20 10l9-8M24 2h6v6" stroke="#999" stroke-width="2" fill="none"/>',
  float: '<rect x="1.500" y="1.500" width="29" height="29" rx="5" fill="none" stroke="#666" stroke-width="3"/><path d="M13 7h12v12H13zM7 13h12v12H7z" fill="#f0f0f0" stroke="#666" stroke-width="3"/>',
  close: '<rect x="1.500" y="1.500" width="29" height="29" rx="5" fill="none" stroke="#666" stroke-width="3"/><path d="M9 9l14 14M23 9L9 23" stroke="#444" stroke-width="5"/>',
};

/* ---------- shared pieces ---------- */
const CSS = `:host,*{box-sizing:border-box}button,input,select{font:inherit;color:inherit;margin:0;padding:0;border-radius:0;outline:none}
.l{font-family:"Open Sans","Noto Sans CJK KR",sans-serif;font-size:17px;font-weight:400}
.tri{width:0;height:0;border:6px solid transparent;border-top:6px solid #555;border-bottom:0;flex:none}
.tri.up{border-top:0;border-bottom:6px solid #555}.tri.r{border:6px solid transparent;border-left:6px solid #555;border-right:0}`;
const define = (name, render, after) => customElements.define(name, class extends HTMLElement {
  connectedCallback() {
    if (this.shadowRoot) return;
    const t = document.createElement('template');
    t.innerHTML = `<style>${CSS}</style>` + render(this, n => this.getAttribute(n) || '');
    this.attachShadow({ mode: 'open' }).append(t.content.cloneNode(true));
    if (after) after(this.shadowRoot, this);
  }
});
const SVG = (body, attrs = '') => `<svg xmlns="http://www.w3.org/2000/svg" viewBox="0 0 32 32" ${attrs} aria-hidden="true">${body}</svg>`;

define('q-icon', (e, a) => `<style>:host{display:block;flex:none;width:var(--s,30px);height:var(--s,30px)}svg{display:block;width:100%;height:100%;fill:none;overflow:visible}</style>${SVG(ICONS[a('name')] || '')}`);

define('tool-button', (e, a) => `<style>:host{display:flex;flex:none}
button{width:var(--w,41px);height:var(--h,39px);display:flex;align-items:center;justify-content:center;background:none;border:1px solid transparent;border-radius:3px}
:host([on]) button{background:#dcdcdc;border-color:#a8a8a8}.dd{width:18px}:host([off]) .tri{border-top-color:#aaa}</style>
<button aria-label="${a('label') || a('icon')}"><q-icon name="${a('icon')}"></q-icon></button>
${e.hasAttribute('menu') ? '<button class="dd" aria-label="menu"><span class="tri"></span></button>' : ''}`);

define('tool-sep', () => `<style>:host{display:flex;flex:none;width:24px;height:100%;align-items:center;justify-content:center}
i{width:6px;height:24px;background:radial-gradient(circle,#aaa 1px,transparent 2px) 0 0/3px 4px}
:host([line]){width:10px}:host([line]) i{width:1px;height:36px;background:#cfcfcf}</style><i></i>`);

define('tool-strip', () => `<style>:host{display:flex;align-items:center;height:51px;padding-left:3px;background:linear-gradient(#fafafb,#f3f3f3 70%,#ececec);border-bottom:1px solid #b4b4b4;overflow:hidden;flex:none}</style><slot></slot>`);

define('title-bar', () => `<style>:host{display:flex;align-items:center;height:40px;flex:none;background:#f3f3f3;color:#8c8c8c;--s:24px;overflow:hidden;padding:0 12px 4px 0}
q-icon{margin:0 4px 0 -3px}h1{font-size:17px;font-weight:400;flex:1;margin:0;font-family:"Open Sans",sans-serif}
button{width:70px;height:30px;border:0;background:none}button:last-child{width:15px;margin-left:27px}svg{display:block;margin:auto;width:16px;height:16px;fill:none;stroke:#888;stroke-width:1.300}</style>
<q-icon name="logo"></q-icon><h1><slot></slot></h1>
<button aria-label="minimize"><svg><path d="M0 8h15"/></svg></button><button aria-label="maximize"><svg><rect x="1" y="1" width="14" height="14" rx="1.500"/></svg></button><button aria-label="close"><svg><path d="M1 1l14 14M15 1L1 15"/></svg></button>`);

define('menu-strip', (e, a) => `<style>:host{display:block;flex:none;height:30px;background:#f0f0f0;border-bottom:1px solid #d2d2d2;overflow:hidden}
nav{display:flex;gap:20px;color:#8c8c8c}button{border:0;background:none;white-space:nowrap;line-height:30px;height:30px}</style>
<nav>${a('items').split('|').map(i => { const [t, k] = i.split('/'); return `<button>${t} <span class="l">(<u>${k}</u>)</span></button>`; }).join('')}</nav>`);

define('side-strip', (e, a) => `<style>:host{display:flex;flex-direction:column;width:54px;flex:none;background:linear-gradient(90deg,#fafafa,#f3f3f3 60%,#ececec);overflow:hidden;--s:32px;--w:32px;--h:40px}
tool-button{margin-left:-4px}i{width:18px;height:5px;margin:8px 0 6px 12px;background:radial-gradient(circle,#aaa 1px,transparent 2px) 0 0/4px 3px}
div{display:flex;align-items:center;justify-content:space-between;padding-right:8px}</style><i></i>
${a('items').split(' ').map(n => `<div><tool-button icon="${n.replace('+', '')}"></tool-button>${n.endsWith('+') ? '<span class="tri"></span>' : ''}</div>`).join('')}`);

define('scroll-bar', () => `<style>:host{display:flex;flex-direction:column;width:21px;flex:none;background:#e6e6e6;border-left:1px solid #b9b9b9}
b{height:20px;background:#fafafa;display:flex;align-items:center;justify-content:center;flex:none}
i{height:var(--thumb,40px);background:#fbfbfb;border:solid #b9b9b9;border-width:1px 0;flex:none}b:last-child{margin-top:auto;border-top:1px solid #b9b9b9}</style><b><span class="tri up"></span></b><i></i><b><span class="tri"></span></b>`);

define('dock-panel', (e, a) => `<style>:host{display:flex;flex-direction:column;min-height:0}
header{display:flex;align-items:center;gap:4px;padding:0 2px 0 4px;height:22px;flex:none;--s:11px}h2{font-size:19px;font-weight:300;margin:0;flex:1;line-height:22px}
header button{border:0;background:none}
.bar{display:flex;align-items:center;height:42px;flex:none;padding-left:5px;--s:22px;--w:33px;--h:30px}
.body{flex:1;min-height:0;display:flex;background:#fff;border:1px solid #b4b4b4;overflow:hidden}</style>
<header><h2>${a('heading')}</h2><button aria-label="float"><q-icon name="float"></q-icon></button><button aria-label="close"><q-icon name="close"></q-icon></button></header>
<div class="bar"><slot name="bar"></slot></div><div class="body"><slot></slot></div>`);

define('tree-row', (e, a) => `<style>:host{display:flex;align-items:center;height:27px;flex:none;--s:22px;padding-left:calc(var(--d,0)*19px + 3px)}
.t{width:12px;display:flex;justify-content:center;margin-right:8px}q-icon{margin-right:7px}</style>
<span class="t">${a('open') === 'yes' ? '<span class="tri"></span>' : a('open') === 'no' ? '<span class="tri r"></span>' : ''}</span><q-icon name="${a('icon')}"></q-icon><slot></slot>`);

const CHECK = `input[type=checkbox]{appearance:none;width:21px;height:21px;border:1px solid #b4b4b4;background:#fff;display:grid;place-items:center;flex:none}
input[type=checkbox]:checked::after{content:"";width:15px;height:17px;background:#000;clip-path:polygon(0 58%,18% 50%,38% 74%,80% 0,100% 4%,46% 100%,30% 100%)}`;
define('layer-row', (e, a) => `<style>:host{display:flex;align-items:center;height:27px;flex:none;padding:0 7px 0 33px;--s:24px}:host([sel]){background:#efefef}
${CHECK}label{display:flex;align-items:center;flex:1;font:700 17px/24px "Open Sans",sans-serif}
i{width:21px;height:21px;margin:0 6px 0 6px;border:1px solid #444;background:${a('color')}}
:host([line]) i{height:2px;border:0}:host([sel]) span{text-decoration:underline;text-underline-offset:3px}</style>
<label><input type="checkbox" checked><i></i><span><slot></slot></span></label>${e.hasAttribute('crs') ? '<q-icon name="unknowncrs"></q-icon>' : ''}`);

/* ---------- map ---------- */
let seed = 7;
const rnd = () => { seed = (seed * 1664525 + 1013904223) >>> 0; return seed / 4294967296; };
const tile = (ox, oy) => s => s.trim().split(/\s+/).map(p => p.split(',').map(Number)).map(([x, y]) => [ox + x * .4611, oy + y / 3]);
const A = tile(1300, 170), B = tile(1300, 630), F = s => s.trim().split(/\s+/).map(p => p.split(',').map(Number));
const toD = pts => 'M' + pts.map(p => p[0].toFixed(1) + ' ' + p[1].toFixed(1)).join('L');
const lines = (conv, s) => s.split(';').filter(x => x.trim()).map(x => toD(conv(x))).join('');
const road = (pts, w, n, step = 8) => {
  const res = [];
  for (let i = 1; i < pts.length; i++) {
    const [x0, y0] = pts[i - 1], [x1, y1] = pts[i], L = Math.hypot(x1 - x0, y1 - y0), k = Math.max(1, Math.round(L / step));
    for (let j = 0; j < k; j++) res.push([x0 + (x1 - x0) * j / k, y0 + (y1 - y0) * j / k, -(y1 - y0) / L, (x1 - x0) / L]);
  }
  let d = '';
  const sway = res.map(() => (rnd() - .5) * Math.min(w, 8) * .4);
  for (let i = 0; i < n; i++) {
    const base = n > 1 ? (i / (n - 1) - .5) * w : 0;
    d += toD(res.map(([x, y, a, b], k) => { const o = base + sway[k] + (rnd() - .5) * w * .4; return [x + a * o, y + b * o]; }));
  }
  return d;
};
const net = (x, y, w, h, nx, ny, keep = .8) => {
  const g = [];
  for (let j = 0; j <= ny; j++) for (let i = 0; i <= nx; i++) g.push([x + (i + (rnd() - .5) * .9) * w / nx, y + (j + (rnd() - .5) * .9) * h / ny]);
  let d = '';
  const at = (i, j) => g[j * (nx + 1) + i];
  for (let j = 0; j <= ny; j++) for (let i = 0; i <= nx; i++) {
    if (i < nx && rnd() < keep) d += toD([at(i, j), at(i + 1, j)]);
    if (j < ny && rnd() < keep) d += toD([at(i, j), at(i, j + 1)]);
  }
  return d;
};
const bits = (cx, cy, rx, ry, n, s = 4) => {
  let d = '';
  for (let i = 0; i < n; i++) {
    const a = rnd() * 6.28, r = Math.sqrt(rnd()), x = cx + Math.cos(a) * r * rx, y = cy + Math.sin(a) * r * ry, p = [];
    for (let k = 0; k < 5; k++) p.push([x + Math.cos(k * 1.257) * s * (.5 + rnd()), y + Math.sin(k * 1.257) * s * (.5 + rnd())]);
    d += toD(p) + 'Z';
  }
  return d;
};
const coastTop = A('-20,10 0,38 38,85 60,72 75,148 90,163 130,146 153,180 180,188 188,168 202,157 230,165 246,180 264,157 290,153 310,154 355,202 375,228 420,252 435,267 470,320 497,342 515,370 550,374 563,368 617,383 637,323 673,281 690,284 710,306 768,315 827,293 857,281 940,318 1003,331 1038,366 1055,412 1060,470 1095,517 1104,545 1108,580 1118,605 1131,667 1153,697 1157,738 1182,815 1184,863 1215,907 1232,922 1245,942 1292,1030 1297,1055 1320,1097 1333,1150 1345,1182 1363,1184 1405,1154 1433,1144 1465,1158 1500,1165 1580,1197');
const coastBot = B('1580,305 1520,350 1470,370 1435,393 1405,420 1380,433 1320,455 1270,463 1255,477 1232,480 1216,522 1230,527 1233,543 1223,590 1217,672 1195,678 1180,676 1145,720 1134,747 1143,808 1166,868 1175,910 1187,940 1213,1006 1182,1052 1174,1108 1183,1150 1183,1188 1215,1250 1220,1322 1221,1364 1202,1383 1180,1420');
const west = F('803,1110 800,1070 806,1034 790,1022 765,1012 757,1000 754,983 700,700 755,208 727,170');
const parcelsA = `180,188 168,238 182,278 202,325 202,358 175,425 148,480 128,512;90,163 92,178 88,207 50,275 28,298;88,207 138,270 140,345;62,202 70,250 105,300;140,286 182,278;28,240 88,180;77,240 92,330 75,388 28,320;90,240 118,350 143,350 138,385 75,388;40,240 56,272 28,300;143,350 143,400 120,450 118,500;
515,370 505,400 475,465 465,540 472,620;530,374 530,470 515,540 512,600;548,376 562,440 563,600;563,368 565,450;605,385 585,430 567,455;617,383 625,460 628,575;617,383 650,450 672,530;570,385 600,425;475,465 455,460 435,500 305,522 280,560;435,500 455,620;420,505 395,560 410,600;372,515 330,600;350,518 310,590;400,510 350,600;475,465 515,520;565,545 515,540 480,590;567,455 590,515 570,590;620,460 590,520;
692,505 740,525 800,572;710,306 722,370 724,400 718,490 692,505 692,455 718,447;692,505 672,535 662,575;755,315 765,360 782,410 817,442 885,448;782,410 803,388 812,350 830,318;803,388 908,390;827,293 853,340 848,365 907,358 912,425 885,437 877,545 850,567 800,572 793,600 822,632 828,706 858,730;
827,295 837,330 834,372 855,410 857,540 870,590 872,660 850,690 835,710;833,293 845,330 842,372 862,410 864,540 881,590 882,650 858,695 838,712;
858,730 800,743 760,752 690,785 665,818;858,730 920,740 1000,773 1130,668;1000,773 1000,862 958,938 910,970 840,1108;748,1000 742,1018 770,1060 800,1088 845,1108;745,995 783,997 820,991 835,970 893,980 910,970;820,991 800,1085;893,980 840,1090;805,1090 825,1052 843,1070;
910,970 920,1015 902,1062 875,1188 1085,1375;902,1062 845,1108 835,1175 805,1177 803,1222 788,1218;875,1188 938,1170 1012,1192 1055,1100 1110,1050 1187,1062 1233,1092 1292,1042;1085,1375 1215,1297 1265,1275 1340,1182;1365,1365 1450,1193 1487,1165;1365,1365 1415,1380;1345,1182 1335,1150 1308,1130 1307,1165 1330,1185;1317,1148 1310,1165 1320,1175 1326,1160 1317,1148;
582,612 622,673 612,720 668,733 660,810;527,645 535,740;510,855 462,902 415,872;410,878 412,940 385,1005 370,1020 372,1110 425,1208 518,1225 592,1065;512,855 514,910 530,940 590,1050 615,1110 630,1190;517,855 520,910 536,940 596,1050;
425,1208 335,1265 300,1310;425,1208 345,1375;425,1208 300,1330;462,1215 460,1250 485,1297 550,1325;485,1297 422,1370 365,1325;550,1365 620,1350 650,1368 760,1325 795,1330 840,1380;600,1360 602,1340 640,1345 638,1365;788,1218 790,1240 808,1275 810,1345;795,1330 785,1380;536,1325 545,1308 570,1306 577,1330 555,1360 536,1340 536,1325;
40,570 43,710;28,705 60,705 82,665 80,575;60,705 105,780;145,620 105,780 142,790;165,640 135,790;180,640 145,750;195,690 205,740 250,800 285,825;300,830 360,730 370,700;310,835 400,745 430,770;195,640 200,700 240,780;255,640 250,700 305,705 320,760;310,705 325,650 345,690;430,780 410,870 415,880;140,812 180,820 240,835;147,810 145,900;173,815 177,895;240,835 250,850 300,930;300,830 330,880 310,930 280,970;330,870 380,850 410,880;325,865 380,900 410,900;105,845 140,812;28,790 40,830 105,880;90,840 130,840;
280,970 310,930 385,1005;310,925 280,905 190,895 160,910;280,970 285,1010;140,1040 300,1000 335,1070 372,1075;215,1035 300,1085 345,1072;300,1085 320,1120 327,1175 285,1200 210,1190;190,1170 230,1120 300,1090;265,1205 290,1240 325,1262 425,1200;180,1265 225,1265 250,1275 290,1240;325,1262 300,1300 360,1305;300,1300 285,1330 350,1340 340,1380;260,1335 210,1380;265,1335 300,1380;28,1380 60,1320 100,1280 150,1268;60,1320 45,1350;28,1160 125,1180;28,1075 120,1060;28,1055 60,1080;
160,910 210,960 165,985 130,990;75,900 110,845 90,840;150,1045 175,1010 180,930`;
const parcelsB = `775,52 855,75 957,100 1010,90 1040,22 1085,0;957,100 925,45 885,12 840,0;785,0 742,240 700,262 682,258 620,205 605,178 558,148;1115,0 1197,17 1237,93 1350,28 1362,0;1405,0 1480,50 1560,135;1237,93 1165,205 1160,250;957,100 983,140 988,180 1007,212 1005,248 1050,252 1060,222 1065,240 1090,240 1097,195 1112,140 1168,198;957,100 897,188 875,262 765,352 697,393;918,155 880,147 780,130 752,138;897,188 917,240 917,312;917,312 948,315 985,290 993,262 935,227 917,243 917,312 940,370 980,430 1030,475;
697,393 650,370 610,377 530,415 510,440 490,495 427,562;682,258 690,330 697,393;575,160 595,220 605,260 612,377;697,393 735,370 765,352 790,420 782,490 780,570;735,370 747,430 735,500 735,570;820,295 835,345 840,420 855,500 855,535 862,570;820,445 850,447 850,470 820,472 820,445;747,435 715,458 695,480 672,465 667,490 680,520 695,500 697,478 733,515;
612,0 617,35 590,120 588,160;570,25 612,37 575,85 555,148;570,25 555,90 532,145;375,0 345,85;335,0 337,80;300,0 333,75;420,0 370,95;262,90 268,270;330,95 317,180 325,275;365,110 367,270 380,310;410,130 410,195 435,285 442,370;270,182 317,180;442,370 480,375 510,440;240,268 325,275 385,325 442,370;385,325 320,405 397,520 427,562 367,655;512,292 545,302 532,360 510,355 512,292;645,175 655,150 703,158 655,185 645,175;
28,15 40,80 110,105 150,160 155,190 205,215 240,268;28,0 50,0;80,0 115,70 165,55 200,20;240,268 170,345;300,280 250,350;60,365 62,400 115,430 145,480 145,540 130,590 165,655;28,480 50,440 75,425;28,515 130,560 200,620;28,565 75,580 140,615 60,612;185,410 187,480 215,520 180,545 180,665;215,520 258,535 262,600 230,690;235,430 232,540;240,430 270,460 282,510 260,560 232,610;300,525 345,610 365,655 245,692;300,525 285,575 245,692;300,525 325,550 395,540 395,585 427,562;75,660 165,668;28,640 70,660 105,730 28,768;105,730 180,670 230,700;230,700 232,770 225,850 228,940 222,980 215,1040;232,770 290,768 325,780 340,830 365,905;28,780 100,900;55,755 80,860 95,890;365,655 380,690 375,760 400,795 415,850 440,860;380,690 430,680 480,705 455,790;365,760 415,735 450,790 400,795;478,545 457,630 480,705;478,545 510,560 523,550 605,670;523,550 510,570 550,680 540,750;
715,670 722,750 735,860 747,930 795,930 805,880 795,858 735,870 695,910 695,950;868,577 915,645 952,715 992,717 988,773 937,868 850,822 795,858;988,773 1002,790 1090,780 1135,747;1040,782 1045,740 1090,695 1135,747;1090,695 1085,670 1120,648 1132,662 1090,695;1137,645 1180,676;937,868 902,855 850,822;850,822 855,880 900,897;855,880 815,910 865,940 902,897 937,868 950,920 940,970 945,1030 952,1125;902,855 900,897;865,940 805,980 800,1010;815,910 795,945;868,940 862,1050 860,1110 890,1110 900,1140;880,930 880,1050 862,1055;845,970 805,1150;950,893 1005,930 1040,1025;950,893 1030,865;695,910 690,950 640,1010;735,870 695,910 770,980 775,1120;605,735 655,790 670,840 630,860 595,885 670,960;565,795 625,850 700,895;670,840 705,900;625,790 615,830 650,850;690,955 715,1060 720,1150;
1055,985 1130,1012 1190,1035;1075,950 1135,975 1130,1010;1115,912 1162,960 1187,940;1130,900 1162,940 1185,940;1085,1068 1178,1083;1085,1068 1092,1155 1183,1148;1030,1085 1085,1068;1020,1115 1115,1160 1215,1260;960,1150 1040,1265 1220,1322;1000,1125 1070,1225 1130,1290;1040,1265 1042,1340 1080,1410;970,1215 965,1410;940,1190 950,1260 960,1410;990,1188 1030,1182;1020,1230 1065,1222;1055,1262 1090,1240 1135,1265 1132,1290;1145,1190 1130,1265;1128,1188 1110,1258;
765,1210 770,1260 760,1380 790,1410;580,1275 620,1305 665,1280 730,1255 775,1265;665,1280 665,1230;620,1305 615,1335 555,1300;1050,525 1112,522 1185,450 1213,435;1185,450 1185,480 1200,520;1213,435 1255,425 1270,463;1185,300 1187,345 1210,430;1115,265 1130,300 1185,305 1165,250;1185,265 1205,280 1245,240 1210,310 1185,305;1060,310 1110,345 1080,395 1040,365;1080,395 1130,400 1180,450;1112,305 1130,360 1125,400;1185,335 1205,350 1195,380;1045,440 1085,398;1020,380 1045,410 1035,455 990,435;
142,825 160,850 225,855;142,825 125,850 90,850;160,850 155,920 115,935 118,980 150,980 130,1040;155,920 220,945;130,1040 150,1010 190,1030 250,1040;222,975 325,960 380,1005;28,1055 90,1050 190,1185 110,1210;190,1185 175,1265 110,1285 65,1320;215,1040 205,1150 190,1185;205,1150 245,1155 265,1195;260,1100 350,1115 355,1200;340,960 370,930;430,800 470,770;415,850 440,790 485,800;395,1065 440,1110 500,1080 550,1040 555,1075 600,1130;420,1055 465,950 500,880;410,1060 440,1060 550,1010 590,1010 575,1090;430,1120 425,1270 500,1250 530,1160 570,1170;620,1080 640,1180;
1505,145 1568,130;1505,145 1500,208 1530,210 1550,180 1568,185;1530,210 1545,235 1557,215`;
const small = conv => s => s.trim().split(/\s+/).map(p => { const [x, y] = p.split(',').map(Number); return toD(conv(`${x - 6},${y - 9} ${x + 6},${y - 7} ${x + 5},${y + 8} ${x - 7},${y + 7} ${x - 6},${y - 9}`)); }).join('');
define('map-canvas', () => {
  const blob = [...coastTop, ...coastBot, ...west];
  let d = lines(A, parcelsA) + lines(B, parcelsB);
  d += road(A('28,535 100,545 150,580 200,605 270,620 350,685 400,700 430,765 490,790 505,850'), 8, 7, 7);
  d += road(A('28,510 80,520 130,555 240,575 300,620 350,670'), 12, 7, 7) + road(A('100,545 160,575 230,600'), 14, 7, 5);
  d += road(A('28,385 40,450 60,500 100,520'), 16, 9, 5);
  d += road(A('350,680 430,640 530,638 570,600 660,570'), 4, 4) + road(A('110,515 200,522 260,495 320,465'), 4, 3, 6) + road(A('290,490 330,460 345,420'), 5, 4, 4) + road(A('120,510 190,440 240,375 247,330 270,300'), 4, 3, 8);
  d += road(A('505,850 560,885 600,925 650,950'), 5, 3) + road(A('28,850 60,920 100,1000 115,1100 130,1180 160,1270 200,1390'), 10, 6, 9);
  d += road(A('100,945 160,910'), 5, 4) + road(A('130,1040 210,1035'), 4, 4) + road(A('150,1150 180,1210 215,1190'), 8, 5, 5) + road(A('200,650 200,700 235,770'), 3, 2);
  d += bits(...A('540,775')[0], 19, 17, 38, 5) + bits(...A('640,795')[0], 14, 12, 12, 5) + road(A('590,770 625,820 655,830'), 5, 4, 5) + bits(...A('690,1060')[0], 27, 34, 64, 5) + bits(...A('625,950')[0], 12, 10, 12) + road(A('640,990 670,1050 690,1110'), 8, 3, 7) + road(A('635,1130 650,1200 675,1225'), 8, 4, 6) + road(A('700,1140 720,1175 785,1200'), 8, 3, 8) + bits(...A('810,1145')[0], 15, 6, 7, 3) + bits(...A('700,930')[0], 12, 6, 5, 3);
  d += net(...A('270,530')[0], 70, 40, 8, 4, .55) + bits(...A('360,640')[0], 14, 14, 16) + net(...A('28,580')[0], 100, 70, 7, 4, .4) + net(...A('300,1240')[0], 50, 45, 3, 3, .35);
  d += road(B('195,0 215,40 260,80 340,90 420,120 530,145'), 5, 5) + road(B('28,330 110,350 190,385 265,430'), 7, 6) + bits(...B('60,270')[0], 20, 25, 16, 5) + net(...B('28,130')[0], 105, 80, 6, 5, .45);
  d += road(B('1168,200 1100,265 1050,330 990,390 980,470 960,520'), 3, 2, 12) + road(B('960,520 860,572 850,605 800,610 770,580 715,655 640,645 580,710 500,780'), 6, 4, 11) + road(B('500,780 485,850 420,910 400,1010 385,1080 375,1250 360,1420'), 8, 5, 11) + road(B('960,520 1050,540 1140,573 1232,543'), 2, 2, 16) + road(B('1000,520 1030,490 1045,450'), 6, 4, 6);
  d += road(B('1165,870 1080,910 1050,1000 1025,1100 940,1165 850,1185 770,1170 650,1205 580,1265 510,1400'), 4, 4, 9) + road(B('900,1190 830,1195 760,1185 680,1205'), 8, 5, 6) + road(B('335,790 365,910 400,1000'), 5, 3) + road(B('500,840 530,890 575,915'), 4, 3);
  d += road(B('1020,830 1050,880 1090,890 1130,850'), 10, 3, 7) + bits(...B('1040,850')[0], 12, 8, 8) + bits(...B('1195,280')[0], 7, 9, 10) + bits(...B('1100,350')[0], 28, 24, 14, 3) + net(...B('28,920')[0], 40, 60, 6, 6) + net(...B('240,1060')[0], 70, 110, 7, 10, .55) + net(...B('400,950')[0], 130, 90, 9, 8, .5) + net(...B('420,1240')[0], 60, 60, 10, 9) + net(...B('560,1080')[0], 120, 40, 10, 4, .6) + bits(...B('380,1250')[0], 14, 50, 50) + net(...B('28,1290')[0], 150, 45, 9, 4, .5);
  d += road(F('727,176 745,190 765,202 800,208'), 26, 22, 4) + net(735, 176, 110, 40, 12, 5) + net(845, 176, 470, 40, 24, 3, .6) + road(F('930,176 960,205'), 14, 7, 6) + road(F('1040,180 1120,204'), 5, 4);
  d += net(765, 990, 520, 125, 22, 6, .62) + road(F('1070,980 1075,1020 1080,1060 1088,1110'), 14, 8, 8) + road(F('800,990 900,1000 1000,990'), 12, 4, 9) + road(F('1100,984 1180,1000 1300,990'), 16, 8, 7) + road(F('805,1100 870,1060 920,1040 1010,1035 1075,1045'), 6, 5) + bits(1210, 1000, 70, 18, 60, 6) + bits(960, 1060, 80, 34, 40, 6) + road(F('1180,1110 1210,1060 1280,1050'), 6, 4) + bits(860, 1080, 40, 18, 30, 6);
  d += small(A)('77,358 450,546 523,475 803,495 883,695 640,660 785,660 55,630 450,910 430,1005 383,1072 405,1105 707,805 160,873 180,940 83,1150 33,1008 90,1330 605,1105 840,1080 770,1045 140,1005 340,1340');
  d += small(B)('180,58 555,42 235,340 355,300 920,418 1015,576 1105,600 1142,542 788,673 900,592 1112,440 1148,400 538,607 545,683 925,1083 832,1147 832,1102 800,1105 473,1048 472,1200 540,1185 300,1230 308,1153 968,803 1080,795 670,158 723,153 735,143 985,940 660,1100');
  const hole = lines(A, '750,898 760,898 758,930 763,945 750,950 735,935 750,925 750,898') + 'Z' + lines(A, '745,950 753,965 748,972 740,965') + 'Z' + lines(A, '748,985 755,985 752,991') + 'Z';
  return `<style>:host{display:block;flex:1;min-width:0;min-height:0;background:#fff;border:1px solid #b4b4b4;border-width:1px 0 1px 1px}svg{display:block;width:100%;height:100%}</style>
<svg viewBox="458 177 1562 924" preserveAspectRatio="xMinYMin slice" aria-label="map"><defs><clipPath id="c"><path d="${toD(blob)}Z"/></clipPath></defs>
<path d="${toD(blob)}Z" fill="#8b5a97"/><path d="${d}" clip-path="url(#c)" fill="none" stroke="#232323" stroke-width="1.300" stroke-linejoin="round"/>
<path d="${toD(blob)}Z" fill="none" stroke="#232323" stroke-width="1.600"/><path d="${hole}" fill="#fff" stroke="#232323"/></svg>`;
});

/* ---------- layer properties window ---------- */
const FIELD = `.f{display:flex;align-items:center;border:1px solid #a9a9a9;border-radius:3px;background:linear-gradient(#fff,#f0f0f0);min-width:0;position:relative}
.f select,.f input{appearance:none;border:0;background:none;flex:1;min-width:0;width:0;height:100%}
.btn{border:1px solid #a9a9a9;border-radius:3px;background:linear-gradient(#fff,#efefef);display:flex;align-items:center;justify-content:center;white-space:nowrap;flex:none}
.spin{display:flex;flex-direction:column;justify-content:center;gap:6px;align-items:center;width:21px;align-self:stretch}`;
define('page-item', () => `<style>:host{display:block;flex:none}button{width:100%;height:41px;border:0;background:none;color:#fff;display:flex;align-items:center;gap:8px;padding-left:5px;text-align:left}
:host([sel]) button{background:#f0f0f0;color:#000;padding-left:8px}</style><button><q-icon name=""></q-icon><span><slot></slot></span></button>`, (root, el) => {
  const icon = document.createElement('q-icon');
  icon.setAttribute('name', el.getAttribute('icon'));
  root.querySelector('q-icon').replaceWith(icon);
});
const PAGES = [['info', '정보'], ['src', '원본'], ['symb', '심볼'], ['plabel', '라벨'], ['mask', '마스크'], ['cube', '<span style="font:17px Open Sans">3D</span> 뷰'], ['diagram', '도표'], ['fields', '필드'], ['form', '속성 양식'], ['join', '결합'], ['aux', '보조 저장소'], ['action', '액션'], ['display', '디스플레이'], ['brush', '렌더링'], ['temporal', '시계열'], ['vars', '변수'], ['meta', '메타데이터']];
define('layer-properties', () => `<style>:host{display:flex;flex-direction:column;background:#f0f0f0;border-radius:12px;overflow:hidden;box-shadow:0 0 0 1px #aaa8,0 18px 46px 6px rgba(0,0,0,.42)}
header{height:44px;display:flex;align-items:center;background:#f3f3f3;padding:0 16px 0 10px;flex:none;--s:25px}header h2{font-size:19px;font-weight:300;margin:0 0 0 4px;flex:1;line-height:24px}
header button{border:0;background:none;width:16px;height:16px}svg{display:block}
.main{flex:1;min-height:0;display:flex;gap:6px}
.left{width:176px;display:flex;flex-direction:column;background:#5c5c5c;flex:none}
.find{height:30px;display:flex;align-items:center;background:#fff;border:1px solid #3a9df0;border-top-width:2px;padding-left:10px;--s:20px;flex:none;gap:8px}
.find input{border:0;flex:1;width:0;height:22px;background:none}.find i{width:2px;height:18px;background:#000}
.pages{flex:1;min-height:0;margin-top:9px;display:flex}.list{flex:1;min-width:0;overflow:hidden}.pages scroll-bar{--thumb:496px;border-left:0}
.right{flex:1;min-width:0;padding:3px 3px 3px 0;display:flex;flex-direction:column}
${FIELD}
.r{display:flex;align-items:center;flex:none}.n{margin-right:13px}
.render{height:32px;padding:0 10px 0 7px;--s:21px;gap:5px;flex:none}
.sym{height:189px;margin-top:9px;display:flex;flex:none}.prev{flex:1;display:grid;place-items:center;padding-right:9px}.prev i{width:62px;height:62px;border:1px solid #222;background:#f3a4b1}
.tree{width:346px;background:#fff;border:1px solid #b4b4b4}.tree div{height:27px;display:flex;align-items:center}.tree div:first-child{background:#efefef;font-weight:700;padding-left:9px}
.tree div+div{padding-left:62px}.tree i{width:20px;height:20px;border:1px solid #444;background:#f3a4b1;margin-right:6px}.tree div:first-child i{background:#a798bd;margin-left:12px}
.ops{display:grid;grid-template-columns:39px 39px;grid-auto-rows:33px;gap:12px 9px;padding:8px 0 0 9px;--s:22px}.ops .btn:not(:first-child){border-color:#ccc}
hr{border:0;border-top:1px solid #a5a5a5;border-bottom:1px solid #fafafa;margin:9px 0 0;flex:none}
.k{width:81px;flex:none}.row{margin-top:10px}
.color{flex:1;height:29px;border:1px solid #a9a9a9;border-radius:3px;background:#fff;padding:2px 4px}.color i{display:block;height:100%;background:#f3a4b1;border-radius:3px}
input[type=range]{appearance:none;flex:1;min-width:0;height:20px;background:linear-gradient(#0a63b8,#1189f0 20%,#2a94f2 60%,#0a63b8) 0 50%/100% 8px no-repeat}
input[type=range]::-webkit-slider-thumb{appearance:none;width:20px;height:20px;border:1px solid #a9a9a9;border-radius:3px;background:linear-gradient(#fff,#f4f4f4)}
.num{width:100px;height:30px;margin:0 13px 0 4px;background:#fff;font-size:18px}.num input{padding-left:5px}.num .spin{border-left:1px solid #b4b4b4;background:#f8f8f8}
.fav{height:26px;flex:1;background:#fff;--s:20px;padding-left:12px;gap:7px}.fav .btn{border:0;width:30px;height:24px;margin-left:4px}
.lst{height:192px;margin-top:7px;background:#fff;border:1px solid #b4b4b4;display:flex;flex:none;overflow:hidden}.lst section{flex:1;display:grid;grid-template-columns:229px 229px;justify-content:start;padding:26px 0 0 0}
figure{margin:0;display:flex;flex-direction:column;align-items:center;height:152px;justify-content:space-between;font:400 17px/24px "Open Sans";white-space:pre}
.g{width:116px;height:98px;border:2px solid #000;border-radius:2px;background:radial-gradient(circle at 4% 4%,#0d0887 0,#6a00a8 24%,#b12a90 42%,#e16462 62%,#fca636 84%,#f0f921 105%)}
.y{width:113px;height:95px;margin-top:1px;background:#969696}
.end{margin-top:auto;gap:9px}.end .btn{height:29px}.end .btn.w{width:80px}.end .btn.w:nth-child(2){border-color:#3a9df0;background:linear-gradient(#fff,#e6eaf1);margin-left:auto}
.st{width:83px;gap:9px}.vw{margin-top:6px;height:31px;--s:20px}.vw .btn{height:29px}.vw .tg{width:32px;height:31px;background:#dcdcdc}.vw .plain{border:0;background:none;width:32px}
.grp{margin-top:28px;height:26px;display:flex;align-items:center;font-weight:500;padding-left:5px;gap:12px;flex:none}.grp .tri{border-left-color:#222}
</style>
<header><q-icon name="logo"></q-icon><h2>레이어 속성 <span class="l">— buildings —</span> 심볼</h2><button aria-label="close"><svg width="16" height="16" stroke="#111" stroke-width="1.500"><path d="M1 1l14 14M15 1L1 15"/></svg></button></header>
<div class="main">
 <div class="left"><label class="find"><q-icon name="search"></q-icon><i></i><input aria-label="search"></label>
  <div class="pages"><div class="list">${PAGES.map(([i, t], n) => `<page-item icon="${i}"${n === 2 ? ' sel' : ''}>${t}</page-item>`).join('')}</div><scroll-bar></scroll-bar></div></div>
 <div class="right">
  <label class="f render"><q-icon name="single"></q-icon><select aria-label="renderer"><option>단일 심볼</option></select><span class="tri"></span></label>
  <div class="sym"><div class="prev"><i></i></div><div class="tree"><div><span class="tri"></span><i></i>채우기</div><div><i></i>단순 채우기</div></div>
   <div class="ops">${['add', 'tup', 'remove', 'tdown', 'dup', 'unlock'].map(n => `<button class="btn" aria-label="${n}"><q-icon name="${n}"></q-icon></button>`).join('')}</div></div>
  <hr>
  <div class="r n row"><label class="k" for="col">색상</label><button class="color" id="col" aria-label="fill"><i></i></button><button class="btn" style="width:19px;height:29px" aria-label="menu"><span class="tri"></span></button></div>
  <div class="r n row"><label class="k" for="op">불투명도</label><input type="range" id="op" value="100"><span class="f num"><input aria-label="opacity" value="100.0 %"><span class="spin"><span class="tri up" style="opacity:.6"></span><span class="tri"></span></span></span><q-icon name="dd" style="--s:21px"></q-icon><span class="tri" style="margin:12px 0 0 -3px"></span></div>
  <div class="r n row"><label class="k" for="un">단위</label><span class="f" style="flex:1;height:26px;padding:0 10px 0 4px"><select id="un"><option>밀리미터</option></select><span class="tri"></span></span></div>
  <hr class="n" style="margin-top:4px">
  <div class="r n" style="margin-top:7px"><span class="f fav"><q-icon name="search"></q-icon><input aria-label="filter" value="즐겨찾기"><q-icon name="clear"></q-icon><button class="btn" aria-label="menu"><span class="tri"></span></button></span><q-icon name="stylemgr" style="--s:22px;margin:0 4px 0 12px"></q-icon></div>
  <div class="lst n"><section><figure><div class="g"></div><figcaption>gradient   plasma</figcaption></figure><figure><div class="y"></div><figcaption>gray 3 fill</figcaption></figure></section><scroll-bar></scroll-bar></div>
  <div class="r n vw"><button class="btn tg" aria-label="icons"><q-icon name="gridview"></q-icon></button><button class="btn plain" aria-label="list"><q-icon name="table"></q-icon></button><button class="btn" style="width:107px;margin-left:auto">심볼 저장⋯</button><button class="btn" style="width:80px;margin-left:6px;gap:15px">확장<span class="tri"></span></button></div>
  <div class="grp"><span class="tri r"></span>레이어 렌더링</div>
  <div class="r end"><button class="btn st">스타일<span class="tri"></span></button><button class="btn w">확인</button><button class="btn w">취소</button><button class="btn w">적용</button><button class="btn w">도움말</button></div>
 </div></div>`);

/* ---------- status bar ---------- */
define('status-strip', () => `<style>:host{display:flex;align-items:flex-start;height:29px;padding-top:3px;overflow:hidden;background:#f0f0f0;flex:none;font-size:17px;--s:24px}
${FIELD}${CHECK}.f{height:30px;background:#fff;font:15px "Liberation Sans","Noto Sans CJK KR";flex:none}
.loc{width:513px;margin-left:-1px;--s:20px;gap:6px;font:300 17px "Noto Sans CJK KR"}.loc input::placeholder{color:#707070;opacity:1}
.sp{flex:1}label,.t{line-height:30px;height:30px;display:flex;align-items:center;white-space:nowrap;flex:none}q-icon{margin-top:2px}.loc q-icon{margin-top:0}</style>
<label class="f loc"><q-icon name="search"></q-icon><input placeholder="위치를 찾으려면 입력하세요 (Ctrl+K)"></label><span class="sp"></span>
<label for="xy">좌표</label><span class="f" style="width:121px;margin:0 4px 0 4px;padding-left:8px"><input id="xy" value="190766,278548"></span><q-icon name="mouse"></q-icon>
<label for="sc" style="margin:0 5px 0 14px">축척</label><span class="f" style="width:121px;padding:0 10px 0 3px"><select id="sc"><option>:1360655104</option></select><span class="tri"></span></span><q-icon name="lock" style="--s:22px;margin-left:12px;margin-top:3px"></q-icon>
<label for="mg" style="margin:0 4px 0 7px">확대경</label><span class="f" style="width:115px;padding-left:5px"><input id="mg" value="100%"><span class="spin"><span class="tri up"></span><span class="tri"></span></span></span>
<label for="ro" style="margin:0 9px 0 10px">회전</label><span class="f" style="width:107px;padding-left:5px"><input id="ro" value="0.0 °"><span class="spin"><span class="tri up"></span><span class="tri"></span></span></span>
<label style="margin:0 16px 0 7px;gap:8px"><input type="checkbox" checked>렌더링</label><q-icon name="crs"></q-icon><span class="t" style="font:15px/30px 'Liberation Sans'">EPSG:4326</span><q-icon name="chat" style="margin-left:25px"></q-icon><q-icon name="puzzle" style="margin:2px 11px 0 14px"></q-icon>`);

/* ---------- application window ---------- */
const T = s => s.trim().split(/\s+/).map(n => n === '|' ? '<tool-sep></tool-sep>' : n === '/' ? '<tool-sep line></tool-sep>' : `<tool-button icon="${n.replace(/[+!-]/g, '')}"${/[+-]/.test(n) ? ' menu' : ''}${n.includes('-') ? ' off' : ''}${n.includes('!') ? ' on' : ''}></tool-button>`).join('');
define('gis-app', () => `<style>:host{display:flex;flex-direction:column;height:100vh;border:3px solid #f00;border-top-width:4px;position:relative;background:#f0f0f0;overflow:hidden}
.work{flex:1;min-height:0;display:flex}
.docks{width:391px;flex:none;display:flex;flex-direction:column;margin-right:9px;border-left:1px solid #b4b4b4}
.docks i{width:18px;height:4px;margin:3px auto 2px;background:radial-gradient(circle,#aaa 1px,transparent 2px) 0 0/4px 4px}
.a{height:260px;flex:none}.b{flex:1}.rows{flex:1;min-width:0;display:flex;flex-direction:column;overflow:hidden}
layer-properties{position:absolute;left:483px;top:204px;width:825px;height:774px}
.note{position:absolute;left:-3px;top:-4px;width:600px;height:600px;pointer-events:none}</style>
<title-bar>*basic_2_2 — QGIS</title-bar>
<menu-strip items="프로젝트/J|편집/E|보기/V|레이어/L|설정/S|플러그인/P|벡터/O|래스터/R|데이터베이스/D|웹/W|메시/M|공간 처리/C|도움말/H"></menu-strip>
<tool-strip>${T('doc open save layout layoutmgr stylemgr | hand pansel zoomin! zoomout zoomfull zoomsel zoomlayer zoomone zoomlast zoomnext newmap new3d bmnew bookmark clock refresh | select+ selform+ deselect+ selpin | identify abacus gear sigma table+ measure+ maptip runaction-')}</tool-strip>
<tool-strip>${T('datasrc geopkg shp spatialite memory meshnew / virtual / | edits pencil savedit addpoly vertex+ multiedit trash cut copy paste undo redo | label diagram / labelpin labelred / lb1 lb2 lb3 lb4 lb5 | metasearch | python | help |')}</tool-strip>
<div class="work">
 <side-strip items="vecadd rasteradd meshadd csvadd litadd virtadd pgadd+ wmsadd xyzadd wfsadd shp+"></side-strip>
 <div class="docks">
  <dock-panel class="a" heading="탐색기">
   ${['boxplus', 'refresh', 'funnel', 'up', 'info'].map(n => `<tool-button slot="bar" icon="${n}"></tool-button>`).join('')}
   <div class="rows"><tree-row icon="favstar">즐겨찾기</tree-row><tree-row open="yes" icon="bookmark">공간 북마크</tree-row><tree-row style="--d:1" icon="folder">사용자 북마크</tree-row><tree-row style="--d:1" icon="folder">프로젝트 북마크</tree-row><tree-row open="no" icon="prjhome">프로젝트 홈</tree-row><tree-row open="yes" icon="home">홈</tree-row><tree-row style="--d:1;font:17px/24px Open Sans" open="no" icon="folder">.cache</tree-row><tree-row style="--d:1" icon="folder"></tree-row></div><scroll-bar></scroll-bar>
  </dock-panel><i></i>
  <dock-panel class="b" heading="레이어">
   ${['layerstyle', 'group', 'eye', 'funneldd'].map(n => `<tool-button slot="bar" icon="${n}"></tool-button>`).join('')}<tool-button slot="bar" icon="eps" menu></tool-button>${['down', 'up', 'boxminus'].map(n => `<tool-button slot="bar" icon="${n}"></tool-button>`).join('')}
   <div class="rows"><layer-row color="#8b5a97" crs>LSMD_CONT_LDREG_29110</layer-row><layer-row color="#8fb58f" line>roads</layer-row><layer-row color="#a798bd" sel>buildings</layer-row><layer-row color="#d5b43c">protected_areas</layer-row></div>
  </dock-panel>
 </div>
 <map-canvas></map-canvas>
</div>
<status-strip></status-strip>
<layer-properties></layer-properties>
<svg class="note" aria-hidden="true"><path d="M245 580L506 420" stroke="#f00" stroke-width="4"/><path d="M537 400L497 414 508 431z" fill="#f00"/></svg>`);
</script>
</body>
</html>
